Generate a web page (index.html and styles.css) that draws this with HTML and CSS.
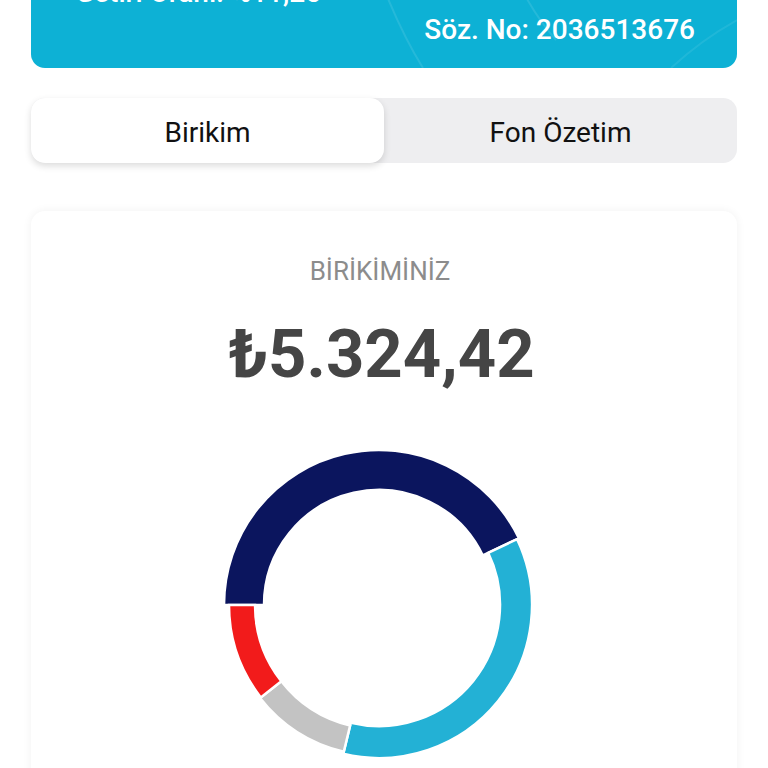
FILE: index.html
```html
<!DOCTYPE html>
<html lang="tr">
<head>
<meta charset="utf-8">
<title>Birikim</title>
<link rel="stylesheet" href="styles.css">
</head>
<body>
<div class="page">
  <header class="banner">
    <svg class="banner-deco" width="706" height="128" viewBox="0 0 706 128" aria-hidden="true">
      <path d="M335 0 Q 362 80 392 128" fill="none" stroke="rgba(255,255,255,0.10)" stroke-width="2"/>
      <path d="M470 0 Q 490 60 525 100" fill="none" stroke="rgba(255,255,255,0.10)" stroke-width="2"/>
      <path d="M640 128 Q 670 100 706 80" fill="none" stroke="rgba(255,255,255,0.08)" stroke-width="2"/>
    </svg>
    <div class="banner-line left">Getiri Oranı: %11,25</div>
    <div class="banner-line right">Söz. No: 2036513676</div>
  </header>

  <nav class="segmented">
    <div class="seg active">Birikim</div>
    <div class="seg">Fon Özetim</div>
  </nav>

  <section class="card">
    <div class="card-title">BİRİKİMİNİZ</div>
    <div class="amount">₺5.324,42</div>
    <svg class="donut" width="320" height="320" viewBox="0 0 320 320">
      <path d="M0 160 A155 155 0 0 1 294.9 93.3 L258.8 110.5 A115 115 0 0 0 40 160 Z" fill="#0b155e" stroke="#fff" stroke-width="2.5"/>
      <path d="M293.1 94.1 A153 153 0 0 1 119.3 308.8 L126.8 277.7 A121 121 0 0 0 264.2 107.9 Z" fill="#23b1d5" stroke="#fff" stroke-width="2.5"/>
      <path d="M119.8 306.8 A151 151 0 0 1 36 253 L57.3 236.3 A124 124 0 0 0 126.1 280.6 Z" fill="#c3c3c3" stroke="#fff" stroke-width="2.5"/>
      <path d="M36.8 252.4 A150 150 0 0 1 5 160 L31 160 A124 124 0 0 0 57.3 236.3 Z" fill="#f21b1b" stroke="#fff" stroke-width="2.5"/>
    </svg>
  </section>
</div>
</body>
</html>
```
FILE: styles.css
```css
html, body {
  margin: 0;
  padding: 0;
  background: #ffffff;
}
body {
  font-family: Roboto, "Liberation Sans", Arial, sans-serif;
  overflow: hidden;
}
.page {
  padding: 0 31px;
  display: flex;
  flex-direction: column;
}
.banner {
  position: relative;
  margin-top: -60px;
  height: 128px;
  box-sizing: border-box;
  padding: 39px 42px 0 44px;
  background: #0db1d5;
  border-radius: 0 0 14px 14px;
  color: #ffffff;
  display: flex;
  flex-direction: column;
  gap: 9px;
  overflow: hidden;
}
.banner-deco {
  position: absolute;
  left: 0;
  top: 0;
}
.banner-line {
  position: relative;
  font-size: 28px;
  line-height: 28px;
  font-weight: 500;
}
.banner-line.right {
  text-align: right;
}
.segmented {
  margin-top: 30px;
  height: 65px;
  background: #eeeef0;
  border-radius: 14px;
  display: flex;
}
.seg {
  flex: 1;
  display: flex;
  align-items: center;
  justify-content: center;
  padding-top: 3px;
  box-sizing: border-box;
  font-size: 28px;
  color: #111111;
  border-radius: 14px;
}
.seg.active {
  background: #ffffff;
  box-shadow: 0 3px 7px rgba(0, 0, 0, 0.14);
}
.card {
  margin-top: 48px;
  height: 700px;
  background: #ffffff;
  border-radius: 14px;
  box-shadow: 0 0 10px rgba(0, 0, 0, 0.06);
  display: flex;
  flex-direction: column;
  align-items: center;
  padding-top: 47px;
  box-sizing: border-box;
}
.card-title {
  font-size: 26px;
  line-height: 26px;
  color: #8c8c8c;
  margin-left: -8px;
}
.amount {
  margin-top: 37px;
  font-size: 67px;
  line-height: 66px;
  font-weight: 700;
  color: #454545;
  margin-left: -5px;
}
.donut {
  margin-top: 58px;
}
```
